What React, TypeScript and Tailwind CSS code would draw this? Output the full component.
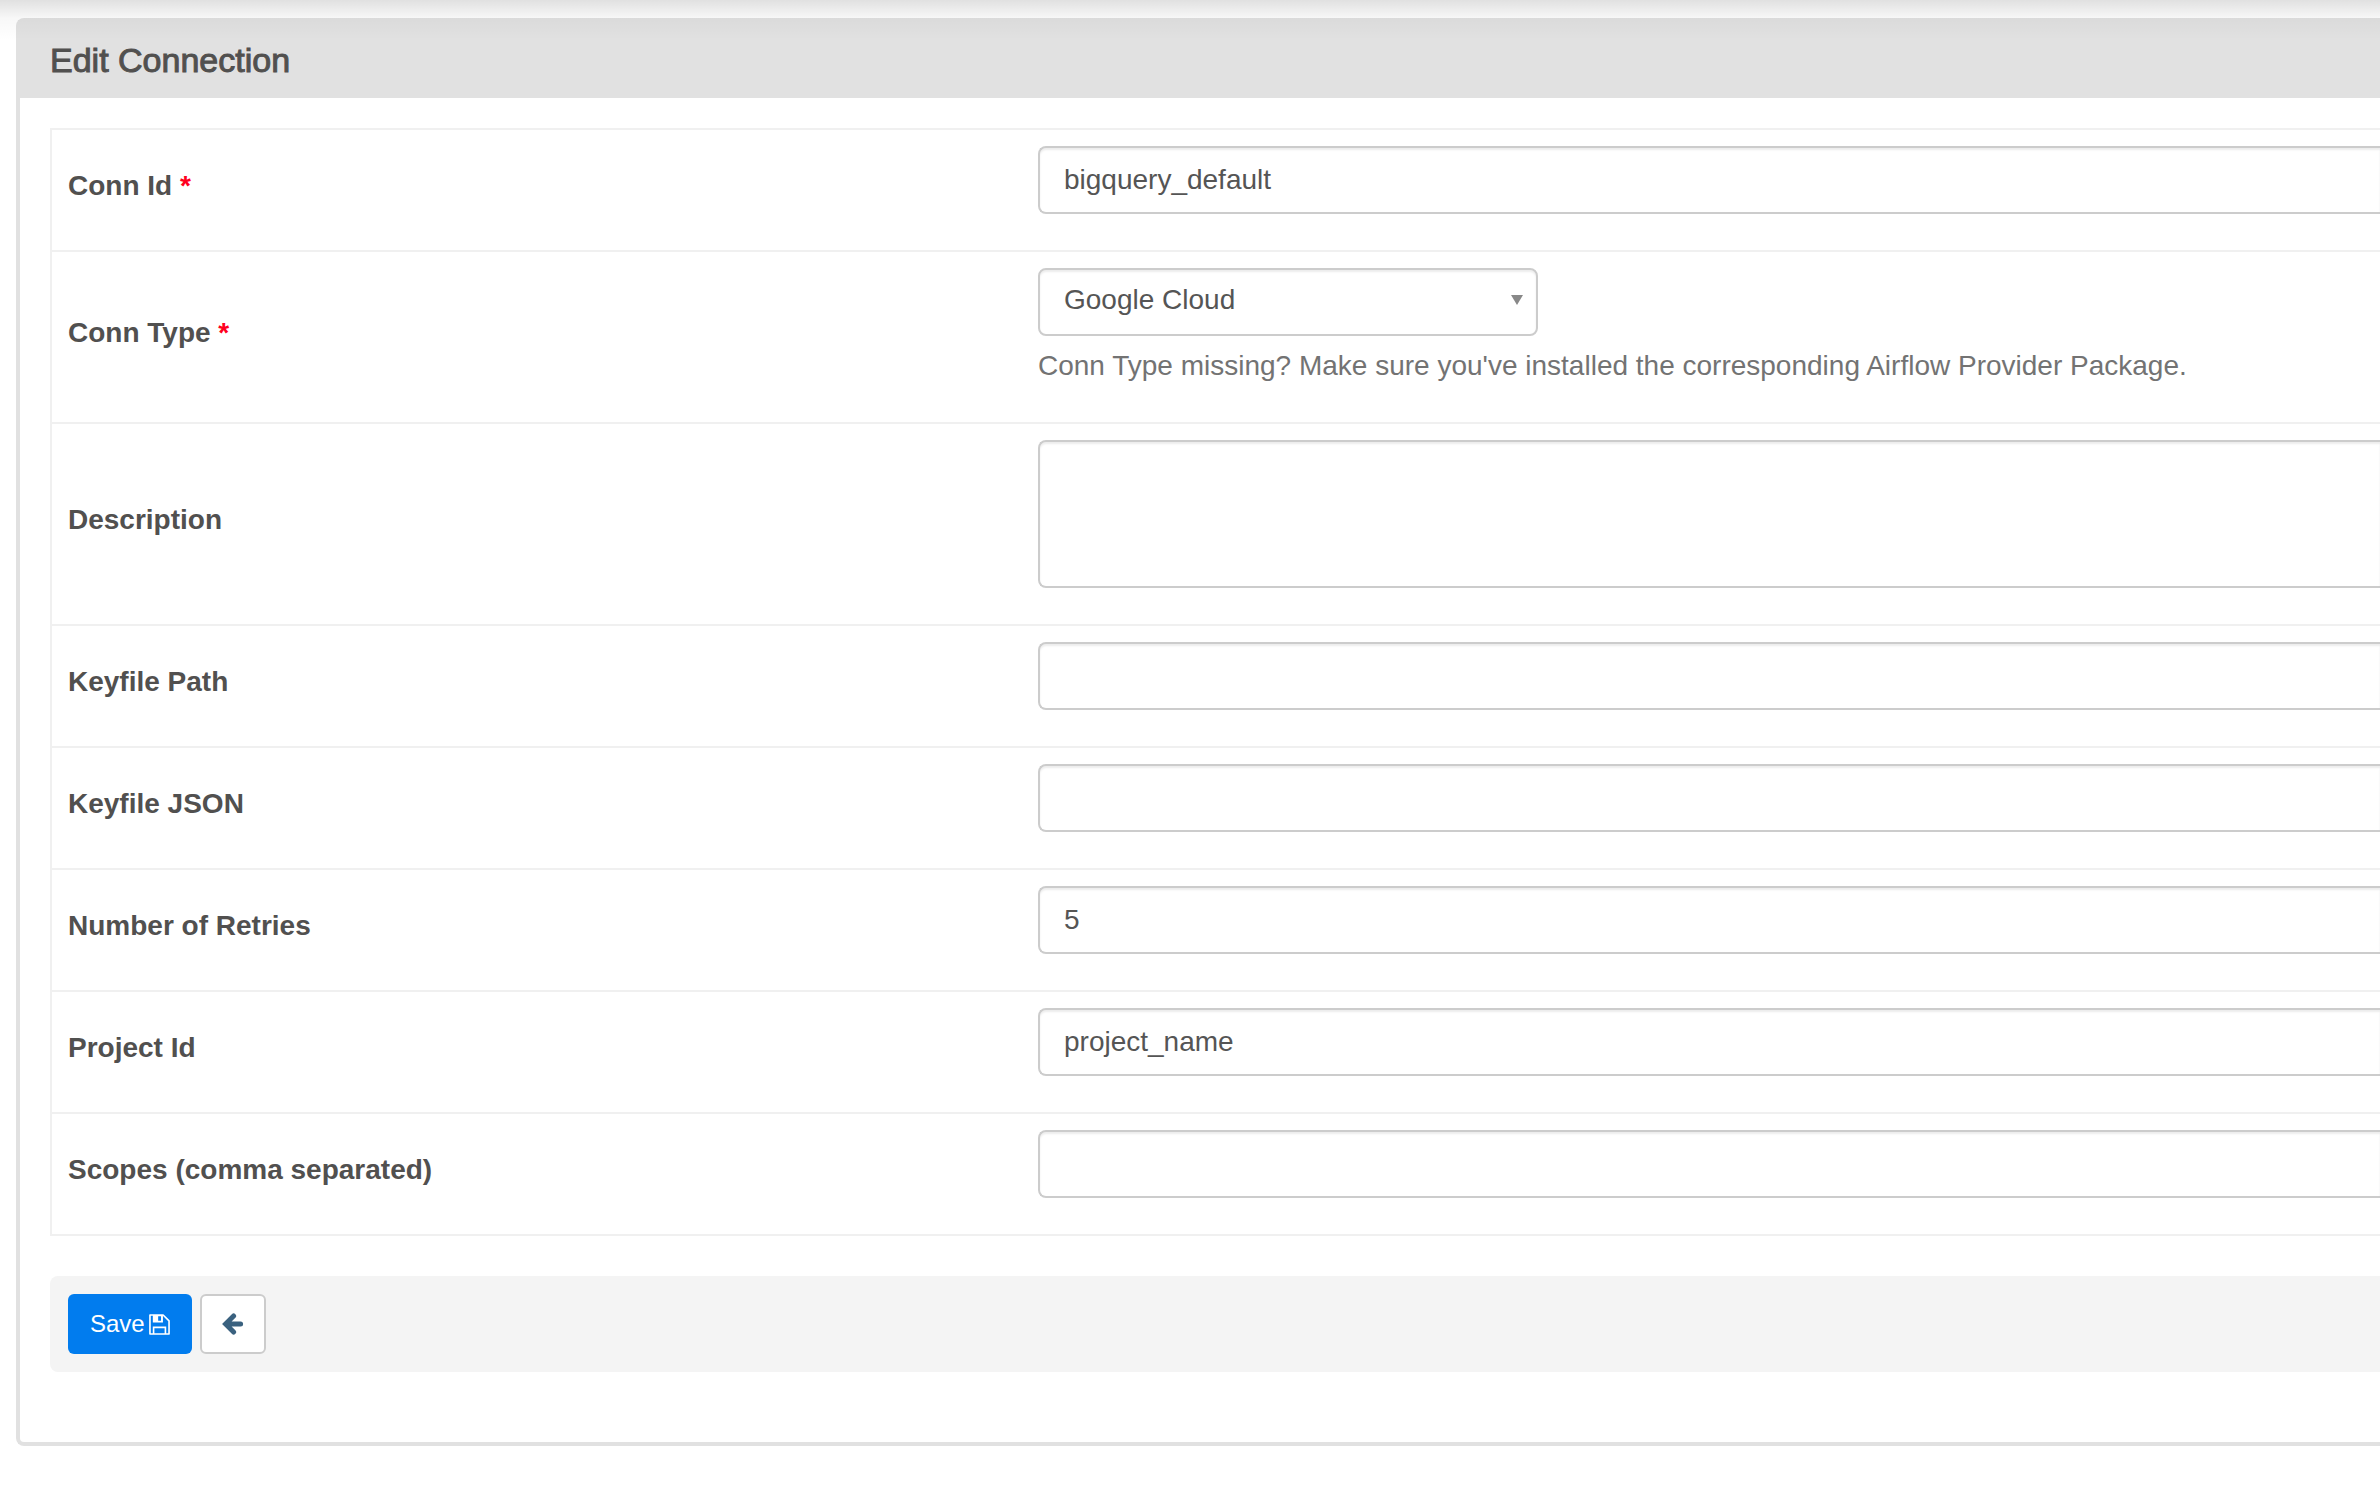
import { type ReactNode, useState } from "react";

const fieldClass =
    "block w-full rounded-l-lg border-2 border-r-0 border-[#ccc] bg-white px-6 text-[28px] leading-10 text-[#555] shadow-[inset_0_2px_2px_rgba(0,0,0,0.075)] outline-none focus:border-[#017cee]";

interface FormRowProps {
    id: string;
    label: string;
    required?: boolean;
    children: ReactNode;
}

function FormRow({ id, label, required, children }: FormRowProps) {
    return (
        <tr>
            <th scope="row" className="w-5/12 border-t-2 border-[#f0f0f0] px-4 pt-4 pb-6 text-left align-middle">
                <label htmlFor={id} className="text-[28px] leading-10 font-bold text-[#51504f]">
                    {label}
                    {required && <span className="text-[#ff0020]"> *</span>}
                </label>
            </th>
            <td className="border-t-2 border-[#f0f0f0] pt-4 pb-9 pl-4">{children}</td>
        </tr>
    );
}

interface TextFieldProps {
    id: string;
    value: string;
    onChange: (id: string, value: string) => void;
}

function TextField({ id, value, onChange }: TextFieldProps) {
    return (
        <input
            id={id}
            type="text"
            value={value}
            onChange={(event) => onChange(id, event.target.value)}
            className={`${fieldClass} h-17`}
        />
    );
}

function FloppyIcon() {
    return (
        <svg viewBox="0 0 22 22" className="h-[21px] w-[21px]" fill="none" stroke="currentColor" aria-hidden="true">
            <path d="M1 1H14.8L21 7.2V21H1Z" strokeWidth="1.7" strokeLinejoin="round" />
            <path d="M4.8 21V14H17.2V21" strokeWidth="1.7" />
            <path d="M4 1H14.6V8.8H4ZM9.6 2.4V7.2H12.6V2.4Z" fill="currentColor" fillRule="evenodd" stroke="none" />
        </svg>
    );
}

function BackIcon() {
    return (
        <svg viewBox="0 0 22 22" className="h-[22px] w-[22px]" fill="none" stroke="currentColor" aria-hidden="true">
            <path d="M11.6 3L3.6 11L11.6 19M4 11H18.6" strokeWidth="5" strokeLinecap="round" />
        </svg>
    );
}

function App() {
    const [values, setValues] = useState<Record<string, string>>({
        conn_id: "bigquery_default",
        conn_type: "google_cloud_platform",
        description: "",
        key_path: "",
        keyfile_dict: "",
        num_retries: "5",
        project: "project_name",
        scope: "",
    });

    const update = (id: string, value: string) => setValues((prev) => ({ ...prev, [id]: value }));

    return (
        <div className="relative min-h-screen overflow-x-hidden bg-white pt-[18px] pl-4 font-['Liberation_Sans',Arial,sans-serif] text-[#51504f]">
            {/* shadow cast by the navbar above */}
            <div className="pointer-events-none absolute inset-x-0 top-0 h-10 bg-linear-to-b from-black/12 via-black/3 via-45% to-transparent" />

            <main className="rounded-l-lg border-4 border-r-0 border-[#e1e1e1]">
                <header className="bg-[#e1e1e1] px-[30px] py-[18px]">
                    <h1 className="text-[34px] leading-10 font-normal [-webkit-text-stroke:1px_#51504f]">
                        Edit Connection
                    </h1>
                </header>

                <form className="pt-[30px] pb-[70px] pl-[30px]" onSubmit={(event) => event.preventDefault()}>
                    <table className="w-full table-fixed border-separate border-spacing-0 border-b-2 border-l-2 border-[#f0f0f0]">
                        <tbody>
                            <FormRow id="conn_id" label="Conn Id" required>
                                <TextField id="conn_id" value={values.conn_id} onChange={update} />
                            </FormRow>
                            <FormRow id="conn_type" label="Conn Type" required>
                                <div className="relative w-[500px]">
                                    <select
                                        id="conn_type"
                                        value={values.conn_type}
                                        onChange={(event) => update("conn_type", event.target.value)}
                                        className="block h-17 w-full appearance-none rounded-lg border-2 border-[#ccc] bg-white px-6 pb-1 text-[28px] leading-10 text-[#555] shadow-[inset_0_2px_2px_rgba(0,0,0,0.075)] outline-none focus:border-[#017cee]"
                                    >
                                        <option value="google_cloud_platform">Google Cloud</option>
                                    </select>
                                    <svg
                                        viewBox="0 0 12 10"
                                        className="pointer-events-none absolute top-[27px] right-[15px] h-[10px] w-[12px]"
                                        aria-hidden="true"
                                    >
                                        <path d="M0 0H12L6 10Z" fill="#888" />
                                    </svg>
                                </div>
                                <p className="mt-[10px] text-[28px] leading-10 text-[#737373]">
                                    Conn Type missing? Make sure you've installed the corresponding Airflow Provider
                                    Package.
                                </p>
                            </FormRow>
                            <FormRow id="description" label="Description">
                                <textarea
                                    id="description"
                                    value={values.description}
                                    onChange={(event) => update("description", event.target.value)}
                                    className={`${fieldClass} h-37 resize-none py-3`}
                                />
                            </FormRow>
                            <FormRow id="key_path" label="Keyfile Path">
                                <TextField id="key_path" value={values.key_path} onChange={update} />
                            </FormRow>
                            <FormRow id="keyfile_dict" label="Keyfile JSON">
                                <TextField id="keyfile_dict" value={values.keyfile_dict} onChange={update} />
                            </FormRow>
                            <FormRow id="num_retries" label="Number of Retries">
                                <TextField id="num_retries" value={values.num_retries} onChange={update} />
                            </FormRow>
                            <FormRow id="project" label="Project Id">
                                <TextField id="project" value={values.project} onChange={update} />
                            </FormRow>
                            <FormRow id="scope" label="Scopes (comma separated)">
                                <TextField id="scope" value={values.scope} onChange={update} />
                            </FormRow>
                        </tbody>
                    </table>

                    <div className="mt-10 flex gap-2 rounded-l-lg bg-[#f4f4f4] p-[18px]">
                        <button
                            type="submit"
                            className="flex h-15 items-center gap-1 rounded-md bg-[#017cee] px-[22px] text-2xl text-white"
                        >
                            Save
                            <FloppyIcon />
                        </button>
                        <button
                            type="button"
                            aria-label="Back"
                            className="flex h-15 items-center rounded-md border-2 border-[#ccc] bg-white px-5 text-[#3a617f]"
                        >
                            <BackIcon />
                        </button>
                    </div>
                </form>
            </main>
        </div>
    );
}

export default App;
